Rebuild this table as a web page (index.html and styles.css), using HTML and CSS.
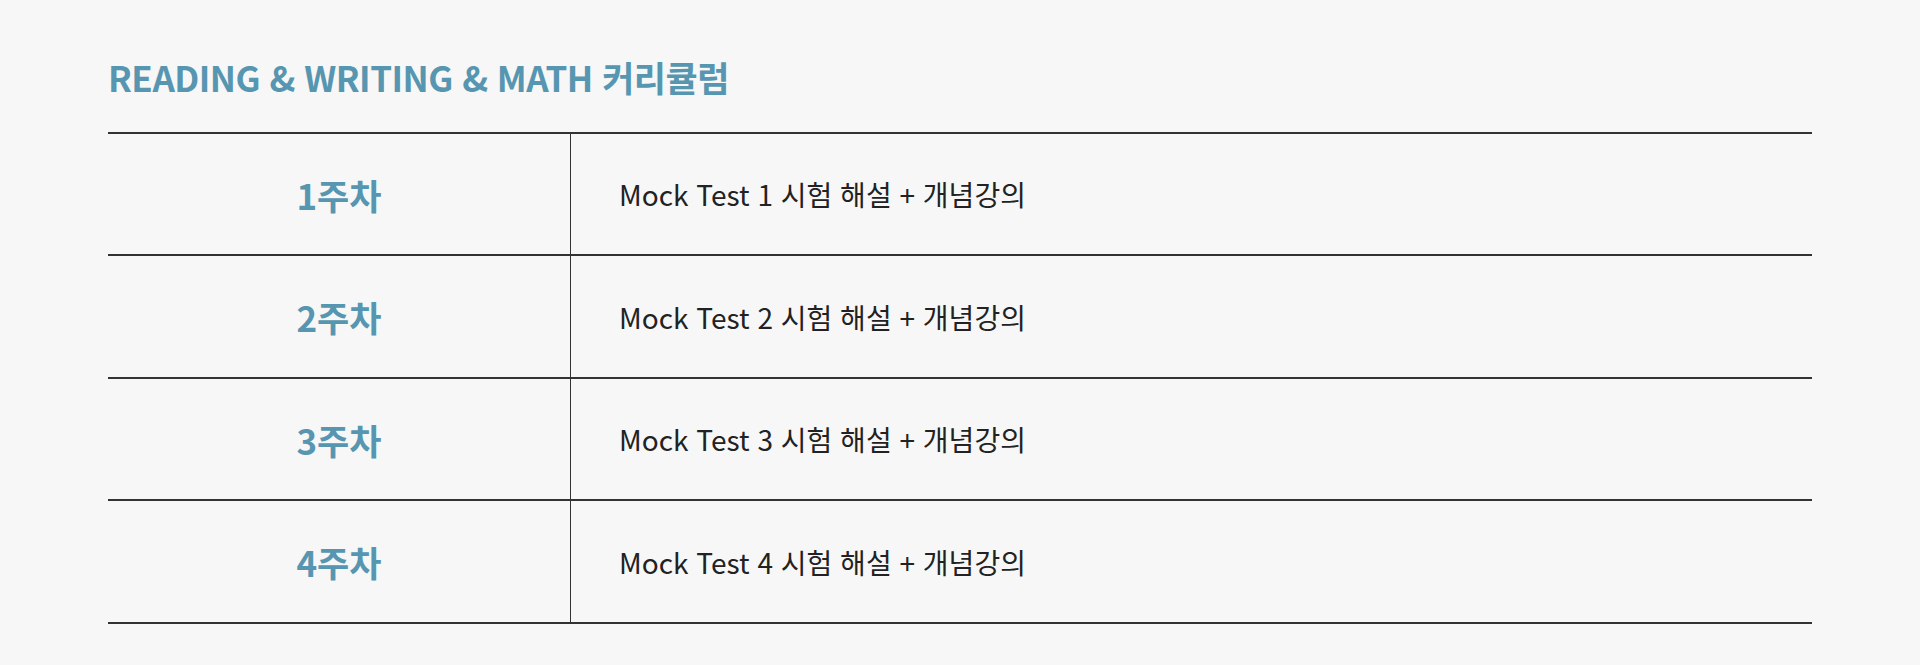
FILE: index.html
```html
<!DOCTYPE html>
<html lang="ko">
<head>
<meta charset="utf-8">
<title>커리큘럼</title>
<link rel="stylesheet" href="styles.css">
</head>
<body>
<section class="curriculum">
  <h2 class="title">READING &amp; WRITING &amp; MATH 커리큘럼</h2>
  <div class="table">
    <div class="row">
      <div class="week">1주차</div>
      <div class="desc">Mock Test 1 시험 해설 + 개념강의</div>
    </div>
    <div class="row">
      <div class="week">2주차</div>
      <div class="desc">Mock Test 2 시험 해설 + 개념강의</div>
    </div>
    <div class="row">
      <div class="week">3주차</div>
      <div class="desc">Mock Test 3 시험 해설 + 개념강의</div>
    </div>
    <div class="row">
      <div class="week">4주차</div>
      <div class="desc">Mock Test 4 시험 해설 + 개념강의</div>
    </div>
  </div>
</section>
</body>
</html>
```

FILE: styles.css
```css
html, body {
  margin: 0;
  padding: 0;
  background: #f7f7f7;
}
body {
  font-family: "Noto Sans CJK KR", "Noto Sans", sans-serif;
  color: #222;
}
.curriculum {
  width: 1704px;
  margin: 0 auto;
  padding-top: 52px;
}
.title {
  margin: 0;
  font-size: 35px;
  font-weight: 700;
  line-height: 50px;
  color: #5796b0;
  letter-spacing: -0.5px;
}
.table {
  margin-top: 30px;
  border-top: 2px solid #333;
}
.row {
  display: grid;
  grid-template-columns: 463px 1fr;
  height: 120.45px;
  border-bottom: 2px solid #333;
}
.week {
  display: flex;
  align-items: center;
  justify-content: center;
  border-right: 1px solid #333;
  font-size: 35px;
  font-weight: 700;
  color: #5796b0;
}
.desc {
  display: flex;
  align-items: center;
  padding-left: 48px;
  font-size: 28px;
  font-weight: 400;
  color: #222;
}
```
